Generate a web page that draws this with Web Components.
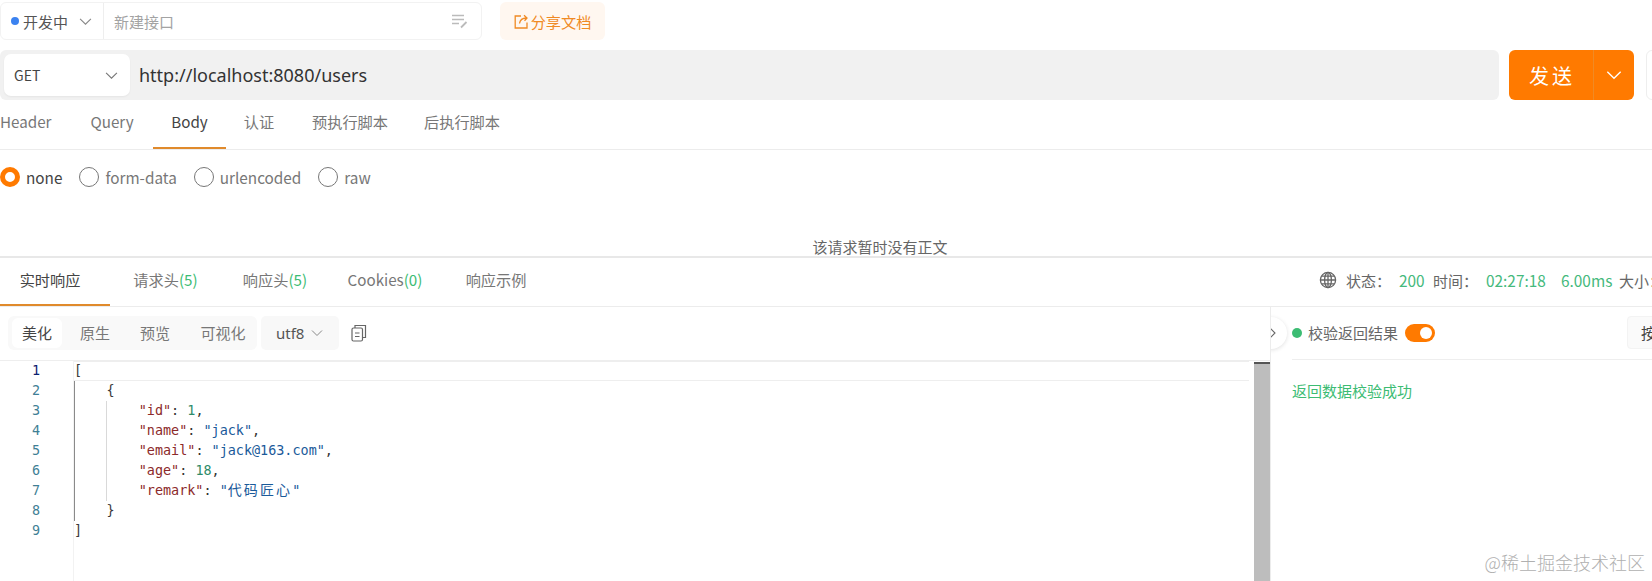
<!DOCTYPE html>
<html lang="zh"><head><meta charset="utf-8"><title>接口调试</title>
<style>
html,body{margin:0;padding:0;background:#fff}
body{font-family:"Noto Sans CJK SC","Noto Sans",sans-serif;width:1652px;height:581px;overflow:hidden;color:#666}
</style></head><body>
<api-app></api-app>
<script>
const chev=(w=12,c='#777')=>`<svg width="${w}" height="${w}" viewBox="0 0 12 12" fill="none" stroke="${c}" stroke-width="1"><path d="M1 3.5 6 8.5 11 3.5"/></svg>`;
function def(name,css,html){
  customElements.define(name,class extends HTMLElement{
    constructor(){super();const t=document.createElement('template');
      t.innerHTML=`<style>${css}</style>${typeof html==='function'?html(this):html}`;
      this.attachShadow({mode:'open'}).appendChild(t.content.cloneNode(true));}
  });
}
def('top-bar',`
:host{display:flex;align-items:stretch;height:38px;margin-top:2px;font-size:15px}
.box{width:482px;flex:none;border:1px solid #f2f2f2;border-radius:6px;box-sizing:border-box;display:flex;align-items:center}
.status{width:103px;height:100%;border-right:1px solid #eee;display:flex;align-items:center;padding-left:10px;box-sizing:border-box;color:#555;flex:none}
.dot{width:8px;height:8px;border-radius:50%;background:#3b82f0;margin-right:4px;flex:none}
.status svg{margin-left:11px}
.name{flex:1;padding-left:10px;color:#a3a3a3}
.ico{margin-right:12px;display:flex}
.share{margin-left:18px;width:105px;flex:none;background:#fff7f0;border-radius:6px;display:flex;align-items:center;justify-content:center;gap:2px;color:#f08a24;font-size:15.2px}
`,`<div class="box"><div class="status"><span class="dot"></span>开发中${chev(13,'#888')}</div><div class="name">新建接口</div>
<span class="ico"><svg width="18" height="16" viewBox="0 0 18 16" fill="none" stroke="#bbb" stroke-width="1.3"><path d="M1 2.5H13M1 6.5H13M1 10.5H8"/><path d="M10 14.5 15.5 9" stroke-width="1.8"/></svg></span></div>
<div class="share"><svg width="15" height="15" viewBox="0 0 15 15" fill="none" stroke="#f08a24" stroke-width="1.3"><path d="M7 2H1.2V14H13V8.5"/><path d="M5.5 9.5C6 6 8.5 4 12.5 4M10 1.2 13 4 10.5 6.8"/></svg><span>分享文档</span></div>`);
def('url-bar',`
:host{display:flex;height:50px;margin-top:10px;position:relative}
.field{width:1499px;flex:none;background:#f1f1f1;border-radius:6px;display:flex;align-items:center;padding-left:4px;box-sizing:border-box}
.method{width:126px;height:42px;background:#fff;border-radius:7px;display:flex;align-items:center;justify-content:space-between;padding:0 12px 0 10px;box-sizing:border-box;font-size:14px;color:#444;box-shadow:0 1px 2px rgba(0,0,0,.05)}
.url{margin-left:9px;font-size:18px;color:#333;font-family:"Noto Sans","Noto Sans CJK SC",sans-serif}
.send{margin-left:10px;width:125px;flex:none;background:#ff7a00;border-radius:6px;display:flex;color:#fff}
.label{width:85px;display:flex;align-items:center;justify-content:center;font-size:20px;letter-spacing:3px;border-right:1px solid #f08a24;box-sizing:border-box;padding-left:2px}
.drop{flex:1;display:flex;align-items:center;justify-content:center}
.more{margin-left:12px;width:40px;flex:none;border:1px solid #eee;border-radius:6px 0 0 6px;box-sizing:border-box}
`,`<div class="field"><div class="method"><span>GET</span>${chev(13,'#777')}</div><span class="url">http://localhost:8080/users</span></div>
<div class="send"><div class="label">发送</div><div class="drop">${chev(16,'#fff')}</div></div><div class="more"></div>`);
def('tab-item',`
:host{display:flex;align-items:center;justify-content:center;box-sizing:border-box;height:100%;white-space:nowrap;color:#777;border-bottom:2px solid transparent;margin-bottom:-1px;padding-bottom:5px;flex:none}
:host([active]){border-bottom-color:#e08a2c;color:#444}
`,`<slot></slot>`);
def('req-tabs',`
:host{display:flex;height:49px;border-bottom:1px solid #ececec;font-size:15.2px}
`,`<tab-item style="width:52px;justify-content:flex-start">Header</tab-item>
<tab-item style="width:50px;margin-left:35px">Query</tab-item>
<tab-item active style="width:73px;margin-left:16px">Body</tab-item>
<tab-item style="width:30px;margin-left:18px">认证</tab-item>
<tab-item style="width:76px;margin-left:38px">预执行脚本</tab-item>
<tab-item style="width:76px;margin-left:36px">后执行脚本</tab-item>`);
def('radio-item',`
:host{display:inline-flex;align-items:center;gap:6px;font-size:15.3px;color:#777;height:22px}
i{width:20px;height:20px;border:1px solid #777;border-radius:50%;box-sizing:border-box;flex:none}
:host([on]) i{border:5px solid #ff7a00}
:host([on]){color:#444}
`,`<i></i><slot></slot>`);
def('req-body',`
:host{display:block;height:106px;overflow:hidden;box-sizing:border-box;padding-top:16px}
.r{display:flex;gap:17px;align-items:center}
.msg{margin-top:49px;text-align:center;font-size:15px;line-height:20px;padding-left:108px;color:#666;width:1652px;box-sizing:border-box}
`,`<div class="r"><radio-item on>none</radio-item><radio-item>form-data</radio-item><radio-item>urlencoded</radio-item><radio-item>raw</radio-item></div>
<div class="msg">该请求暂时没有正文</div>`);
def('res-tabs',`
:host{display:flex;border-top:2px solid #e8e8e8;border-bottom:1px solid #ececec;font-size:15.2px;box-sizing:content-box;height:48px}
b{font-weight:400;color:#3cbc73}
.status{margin-left:auto;width:333px;overflow:hidden;display:flex;align-items:center;white-space:nowrap;font-size:15px;color:#666;padding-bottom:4px;box-sizing:border-box;flex:none}
.status span{flex:none}
.g{color:#45b97c;font-size:15.4px}
`,`<tab-item active style="width:110px;color:#444;padding-right:10px">实时响应</tab-item>
<tab-item style="width:65px;margin-left:23px">请求头<b>(5)</b></tab-item>
<tab-item style="width:66px;margin-left:44px">响应头<b>(5)</b></tab-item>
<tab-item style="width:76px;margin-left:39px">Cookies<b>(0)</b></tab-item>
<tab-item style="width:60px;margin-left:43px">响应示例</tab-item>
<div class="status"><svg style="margin-left:0;flex:none" width="18" height="18" viewBox="0 0 18 18" fill="none" stroke="#666" stroke-width="1.3"><circle cx="9" cy="9" r="7.6"/><ellipse cx="9" cy="9" rx="3.4" ry="7.6"/><path d="M9 1.4V16.6M1.4 9H16.6M2.6 5.2H15.4M2.6 12.8H15.4"/></svg>
<span style="margin-left:9px;width:53px">状态：</span><span class="g" style="width:34px">200</span><span style="width:53px">时间：</span><span class="g" style="width:75px">02:27:18</span><span class="g" style="width:58px">6.00ms</span><span>大小：</span></div>`);
def('view-bar',`
:host{display:flex;align-items:center;font-size:15px;padding:0 0 2px 8px;box-sizing:border-box;color:#777}
.seg{display:flex;align-items:center;width:249px;height:34px;background:#f9f9f9;border-radius:6px;padding-left:4px;box-sizing:border-box;flex:none}
.seg span{width:60px;text-align:center;flex:none}
.seg span.on{width:50px;height:30px;line-height:30px;background:#fff;border-radius:6px;color:#444}
.seg span:nth-child(2){margin-left:3px}
.seg span:nth-child(4){width:66px;margin-left:5px}
.enc{margin-left:4px;width:78px;height:34px;background:#f8f8f8;border-radius:5px;display:flex;align-items:center;gap:7px;padding-left:15px;box-sizing:border-box;font-size:15px;color:#555;font-family:"Noto Sans",sans-serif;flex:none}
.copy{margin-left:12px;display:flex}
`,`<div class="seg"><span class="on">美化</span><span>原生</span><span>预览</span><span>可视化</span></div>
<div class="enc">utf8${chev(12,'#888')}</div>
<span class="copy"><svg width="16" height="18" viewBox="0 0 16 18" fill="none" stroke="#666" stroke-width="1.2"><rect x="1" y="4" width="10.5" height="13" rx="1.5"/><path d="M4 4V1.5H14.5V13.5H11.5M4 9H8.5M4 12.5H8.5"/></svg></span>`);
const lines=[
 `<s>[</s>`,
 `    <s>{</s>`,
 `        <k>"id"</k>: <n>1</n>,`,
 `        <k>"name"</k>: <v>"jack"</v>,`,
 `        <k>"email"</k>: <v>"jack@163.com"</v>,`,
 `        <k>"age"</k>: <n>18</n>,`,
 `        <k>"remark"</k>: <v>"<c>代码匠心</c>"</v>`,
 `    <s>}</s>`,
 `<s>]</s>`];
def('code-view',`
:host{display:flex;flex:1;min-height:0;font-family:"DejaVu Sans Mono","Noto Sans CJK SC",monospace;font-size:13.45px;line-height:20px;color:#333}
.gutter{width:73px;flex:none;border-right:1px solid #f2f2f2;box-sizing:content-box}
.gutter div{width:40px;text-align:right;color:#3f7f95;height:20px}
.gutter div:first-child{color:#0b216f}
.code{flex:1;white-space:pre;position:relative;box-sizing:border-box;min-width:0}
.line{height:20px;position:relative;box-sizing:border-box}
.line.cur{border-top:1px solid #eee;border-bottom:1px solid #eee;line-height:18px;margin-right:5px}
s{text-decoration:none;color:#3a3a3a}
k{color:#8c2a2a}n{color:#2e8b6a}v{color:#1a5a9a}
c{font-family:"Noto Sans CJK SC",sans-serif;font-size:14px;letter-spacing:2.1px;line-height:1}
.line.g1{box-shadow:inset 1px 0 0 #8a8a8a}
.line.g2::before{content:"";position:absolute;left:32px;top:0;bottom:0;width:1px;background:#d9d9d9}
.bar{width:16px;flex:none;background:#bdbdbd;border-top:2px solid #555;box-sizing:border-box;margin-top:1px}
`,`<div class="gutter">${lines.map((_,i)=>`<div>${i+1}</div>`).join('')}</div>
<div class="code">${lines.map((l,i)=>`<div class="line ${i==0?'cur':''} ${i==1||i==7?'g1':''} ${i>1&&i<7?'g1 g2':''}">${l}</div>`).join('')}</div>
<div class="bar"></div>`);
def('check-pane',`
:host{display:block;width:382px;flex:none;border-left:1px solid #ececec;box-sizing:border-box;position:relative;overflow:hidden;font-size:15px}
.handle{position:absolute;left:-16px;top:10px;width:32px;height:32px;border-radius:50%;background:#fff;box-shadow:0 1px 4px rgba(0,0,0,.12);display:flex;align-items:center;justify-content:flex-end;padding-right:11px;box-sizing:border-box}
.head{height:53px;margin-left:21px;border-bottom:1px solid #eee;display:flex;align-items:center;box-sizing:border-box;color:#666;white-space:nowrap;padding-bottom:1px}
.dot{width:10px;height:10px;border-radius:50%;background:#3cbc73;margin-right:6px;flex:none}
.sw{width:30px;height:18px;border-radius:9px;background:#ff7a00;margin-left:7px;display:flex;align-items:center;justify-content:flex-end;padding-right:3px;box-sizing:border-box;flex:none}
.sw i{width:12px;height:12px;border-radius:50%;background:#fff}
.btn{margin-left:192px;width:60px;height:33px;background:#fafafa;border:1px solid #f3f3f3;border-radius:4px;box-sizing:border-box;padding-left:13px;line-height:31px;color:#444;flex:none;white-space:nowrap}
.ok{margin:21px 0 0 21px;color:#3cbc73;line-height:20px}
`,`<div class="handle"><svg width="7" height="12" viewBox="0 0 7 12" fill="none" stroke="#666" stroke-width="1.1"><path d="M1 1 6 6 1 11"/></svg></div>
<div class="head"><span class="dot"></span><span>校验返回结果</span><span class="sw"><i></i></span><span class="btn">按</span></div>
<div class="ok">返回数据校验成功</div>`);
def('api-app',`
:host{display:block;width:1652px;height:581px;overflow:hidden;position:relative}
.main{display:flex;height:274px}
.left{width:1270px;flex:none;display:flex;flex-direction:column}
.left view-bar{border-bottom:1px solid #eee;height:54px;flex:none}
.mark{position:absolute;right:7px;bottom:7px;font-size:18px;font-weight:300;color:#b0b0b0;line-height:24px}
`,`<top-bar></top-bar><url-bar></url-bar><req-tabs></req-tabs><req-body></req-body><res-tabs></res-tabs>
<div class="main"><div class="left"><view-bar></view-bar><code-view></code-view></div><check-pane></check-pane></div>
<div class="mark">@稀土掘金技术社区</div>`);
</script></body></html>
